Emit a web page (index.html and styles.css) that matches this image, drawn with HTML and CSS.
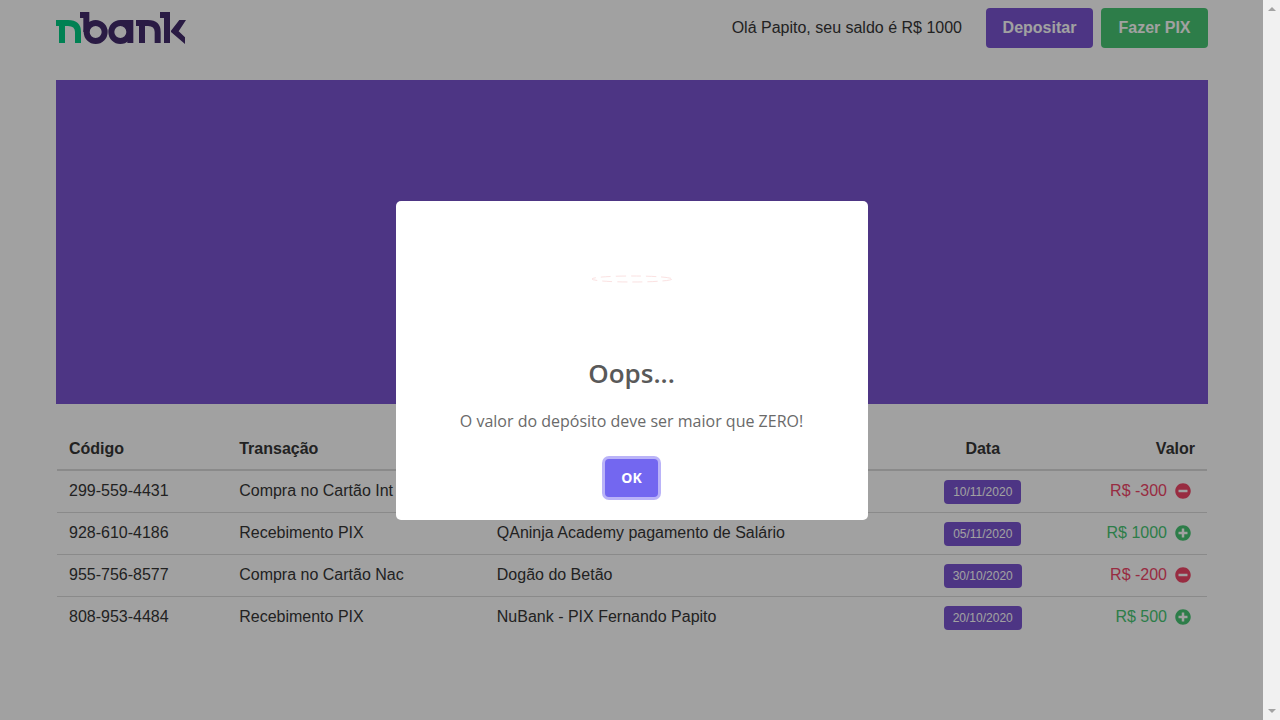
FILE: index.html
```html
<!DOCTYPE html>
<html lang="pt-BR">
<head>
<meta charset="utf-8">
<meta name="viewport" content="width=device-width, initial-scale=1">
<title>nbank</title>
<link rel="stylesheet" href="styles.css">
</head>
<body>
<svg class="defs" aria-hidden="true">
  <symbol id="minus" viewBox="0 0 512 512"><path fill="currentColor" d="M256 8C119 8 8 119 8 256s111 248 248 248 248-111 248-248S393 8 256 8zM124 296c-7 0-12-5-12-12v-56c0-7 5-12 12-12h264c7 0 12 5 12 12v56c0 7-5 12-12 12H124z"/></symbol>
  <symbol id="plus" viewBox="0 0 512 512"><path fill="currentColor" d="M256 8C119 8 8 119 8 256s111 248 248 248 248-111 248-248S393 8 256 8zm144 276c0 7-5 12-12 12h-92v92c0 7-5 12-12 12h-56c-7 0-12-5-12-12v-92h-92c-7 0-12-5-12-12v-56c0-7 5-12 12-12h92v-92c0-7 5-12 12-12h56c7 0 12 5 12 12v92h92c7 0 12 5 12 12v56z"/></symbol>
</svg>
<div class="page">
  <div class="container">
    <header class="navbar">
      <a class="brand" href="#" aria-label="nbank">
        <svg class="logo" viewBox="48 36 390 96" aria-hidden="true">
          <path fill="none" stroke="#00cc84" stroke-width="18" d="M48 69H84Q114 69 114 96V129M66 69V129"/>
          <g fill="none" stroke="#432c6c" stroke-width="18">
            <path d="M120 45H148M139 36V96"/>
            <circle cx="167" cy="96" r="27"/>
            <circle cx="241" cy="96" r="27"/>
            <path d="M241 69H280M271 60V129"/>
            <path d="M288 69H324Q353 69 353 96V129M306 69V129"/>
            <path d="M360 45H390M381 36V129"/>
          </g>
          <path fill="#432c6c" d="M393 92L418 60H438L416 94L435 112V132L393 96Z"/>
        </svg>
      </a>
      <div class="account">
        <span class="balance">Olá Papito, seu saldo é R$ 1000</span>
        <div class="actions">
          <button class="button primary" type="button">Depositar</button>
          <button class="button success" type="button">Fazer PIX</button>
        </div>
      </div>
    </header>
    <main>
      <section class="hero"></section>
      <div class="statement">
        <table class="table">
          <colgroup><col class="col-code"><col class="col-type"><col class="col-desc"><col class="col-date"><col></colgroup>
          <thead>
            <tr><th>Código</th><th>Transação</th><th></th><th class="center">Data</th><th class="right">Valor</th></tr>
          </thead>
          <tbody>
            <tr><td>299-559-4431</td><td>Compra no Cartão Int</td><td></td><td class="center"><span class="tag">10/11/2020</span></td><td><span class="amount out">R$ -300<svg class="icon" aria-hidden="true"><use href="#minus"/></svg></span></td></tr>
            <tr><td>928-610-4186</td><td>Recebimento PIX</td><td>QAninja Academy pagamento de Salário</td><td class="center"><span class="tag">05/11/2020</span></td><td><span class="amount in">R$ 1000<svg class="icon" aria-hidden="true"><use href="#plus"/></svg></span></td></tr>
            <tr><td>955-756-8577</td><td>Compra no Cartão Nac</td><td>Dogão do Betão</td><td class="center"><span class="tag">30/10/2020</span></td><td><span class="amount out">R$ -200<svg class="icon" aria-hidden="true"><use href="#minus"/></svg></span></td></tr>
            <tr><td>808-953-4484</td><td>Recebimento PIX</td><td>NuBank - PIX Fernando Papito</td><td class="center"><span class="tag">20/10/2020</span></td><td><span class="amount in">R$ 500<svg class="icon" aria-hidden="true"><use href="#plus"/></svg></span></td></tr>
          </tbody>
        </table>
      </div>
    </main>
  </div>
  <div class="overlay">
    <div class="modal" role="dialog" aria-modal="true" aria-labelledby="modal-title">
      <svg class="modal-icon" viewBox="0 0 82 8" aria-hidden="true"><ellipse cx="41" cy="4" rx="40" ry="3"/></svg>
      <h2 class="modal-title" id="modal-title">Oops...</h2>
      <p class="modal-text">O valor do depósito deve ser maior que ZERO!</p>
      <button class="confirm" type="button">OK</button>
    </div>
  </div>
</div>
<div class="scrollbar" aria-hidden="true"><span class="arrow up"></span><span class="arrow down"></span></div>
</body>
</html>
```
FILE: styles.css
```css
* { box-sizing: border-box; }
body {
  margin: 0;
  min-height: 100vh;
  display: flex;
  background: #fff;
  color: #363636;
  font: 16px/24px "Liberation Sans", Arial, sans-serif;
}
button { font: inherit; border: 0; cursor: pointer; }
.defs { position: absolute; width: 0; height: 0; }
.page { position: relative; flex: 1; }
.container { margin: 0 55px 0 56px; }
.navbar {
  display: flex;
  align-items: center;
  justify-content: space-between;
  padding: 8px 0;
  margin-bottom: 24px;
}
.brand, .logo { display: block; }
.logo { width: 130px; height: 32px; }
.account { display: flex; align-items: center; gap: 24px; }
.actions { display: flex; gap: 8px; }
.button {
  height: 40px;
  padding: 0 16px;
  min-width: 107px;
  border-radius: 4px;
  color: #fff;
  font-weight: 700;
}
.primary { background: #7a55d1; }
.success { background: #48c774; }
.hero { height: 324px; background: #7a55d1; }
.statement { padding: 24px 1px 0; }
.table { width: 100%; border-spacing: 0; table-layout: fixed; }
.col-code { width: 14.8%; }
.col-type { width: 22.4%; }
.col-desc { width: 37%; }
.col-date { width: 12.6%; }
th, td { padding: 8px 12px; text-align: left; vertical-align: top; border-bottom: 1px solid #dbdbdb; }
th { border-bottom-width: 2px; padding-top: 9px; }
td { height: 42px; }
tbody tr:last-child td { border-bottom: 0; }
.table .center { text-align: center; }
.table .right { text-align: right; }
.tag {
  display: inline-flex;
  align-items: center;
  height: 24px;
  padding: 0 9px;
  border-radius: 4px;
  background: #7a55d1;
  color: #fff;
  font-size: 12px;
  vertical-align: top;
  margin-top: 1px;
}
.amount { display: flex; align-items: center; justify-content: flex-end; gap: 8px; padding-right: 4px; }
.icon { width: 16px; height: 16px; }
.out { color: #f14668; }
.in { color: #48c774; }
.overlay {
  position: absolute;
  inset: 0;
  display: flex;
  align-items: center;
  justify-content: center;
  background: rgba(0, 0, 0, .37);
}
.modal {
  display: flex;
  flex-direction: column;
  align-items: center;
  width: 472px;
  padding: 74px 20px 23px;
  border-radius: 5px;
  background: #fff;
  font-family: "Open Sans", "Noto Sans", sans-serif;
}
.modal-icon { width: 82px; height: 8px; }
.modal-icon ellipse { fill: none; stroke: #fbe2e2; stroke-width: 1; stroke-dasharray: 10 5; }
.modal-title { margin: 72px 0 0; color: #595959; font-size: 26px; line-height: 36px; font-weight: 600; }
.modal-text { margin: 18px 0 26px; color: #6a6a6a; font-size: 16px; line-height: 24px; }
.confirm {
  height: 38px;
  padding: 0 16px;
  border-radius: 4px;
  background: #7367f0;
  color: #fff;
  font-size: 14px;
  font-weight: 700;
  box-shadow: 0 0 0 3px #bab3f8;
}
.scrollbar {
  display: flex;
  flex-direction: column;
  align-items: center;
  justify-content: space-between;
  width: 17px;
  padding: 7px 0;
  background: #f1f1f1;
}
.arrow { border: solid transparent; border-width: 0 4px; }
.up { border-bottom: 4px solid #a3a3a3; }
.down { border-top: 4px solid #a3a3a3; }
```
